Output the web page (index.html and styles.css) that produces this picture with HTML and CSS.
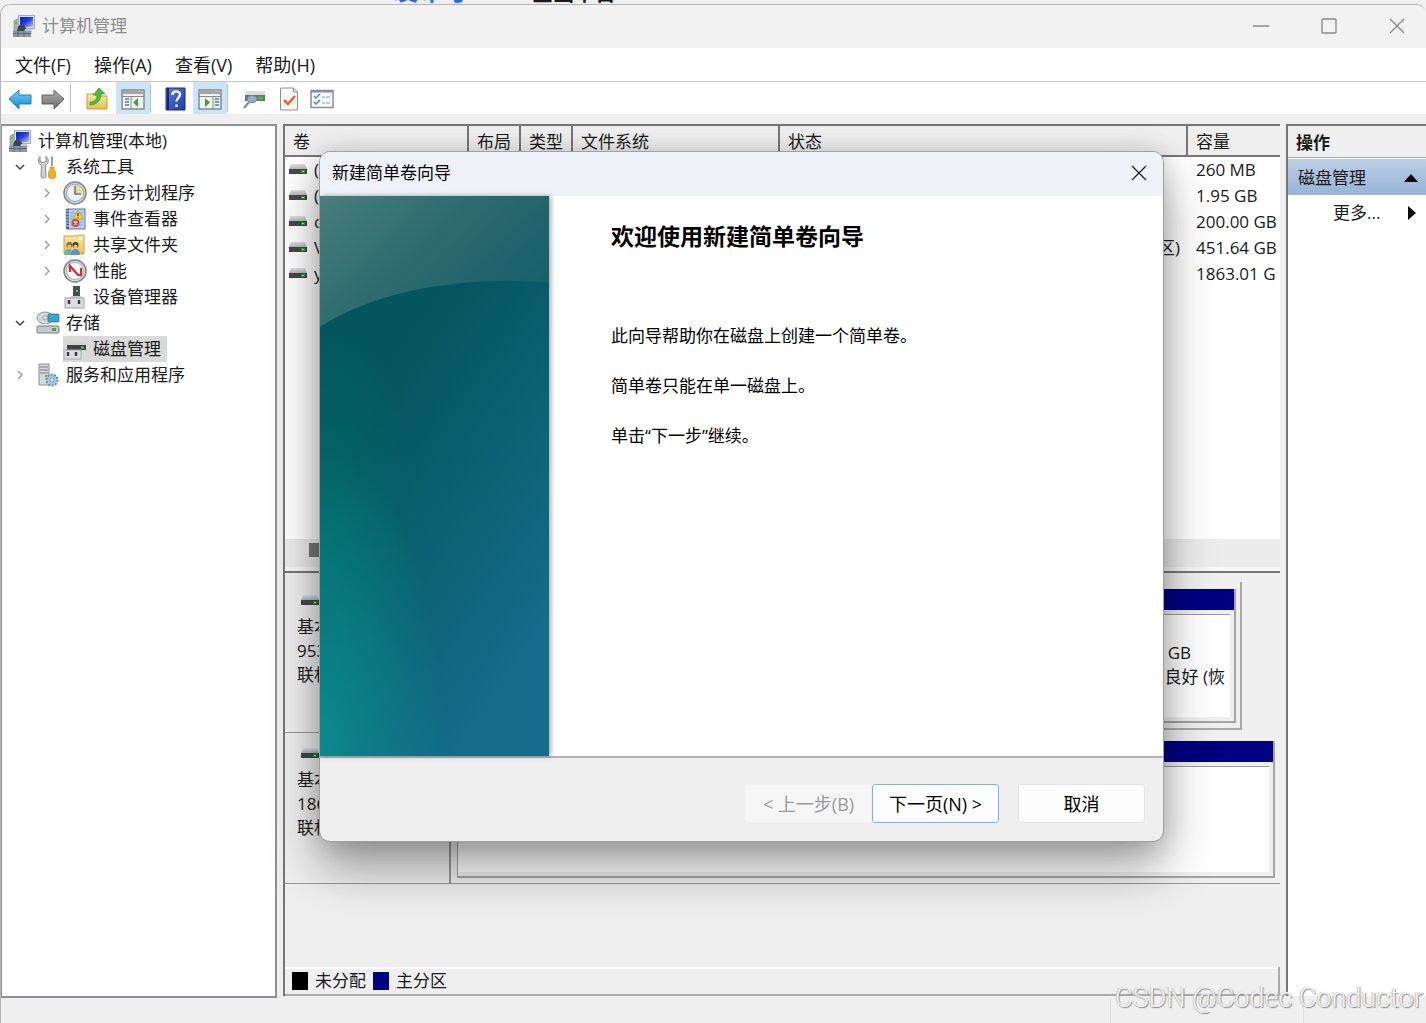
FILE: index.html
```html
<!DOCTYPE html>
<html lang="zh-CN">
<head>
<meta charset="utf-8">
<title>计算机管理</title>
<link rel="stylesheet" href="styles.css">
</head>
<body>
<svg class="defs" aria-hidden="true">
  <defs>
    <linearGradient id="gBlue" x1="0" y1="0" x2="1" y2="1"><stop offset="0" stop-color="#0a1cc0"/><stop offset=".5" stop-color="#2a3fe0"/><stop offset="1" stop-color="#b9c8ff"/></linearGradient>
    <linearGradient id="gArrow" x1="0" y1="0" x2="0" y2="1"><stop offset="0" stop-color="#7fd0f7"/><stop offset="1" stop-color="#0b86cf"/></linearGradient>
    <linearGradient id="gGrey" x1="0" y1="0" x2="0" y2="1"><stop offset="0" stop-color="#b0b0b0"/><stop offset="1" stop-color="#6c6c6c"/></linearGradient>
    <linearGradient id="gFolder" x1="0" y1="0" x2="0" y2="1"><stop offset="0" stop-color="#fbe6a0"/><stop offset="1" stop-color="#e9bf55"/></linearGradient>
    <linearGradient id="gHelp" x1="0" y1="0" x2="1" y2="1"><stop offset="0" stop-color="#5a7ee0"/><stop offset="1" stop-color="#1a3aa8"/></linearGradient>
    <linearGradient id="gDrive" x1="0" y1="0" x2="0" y2="1"><stop offset="0" stop-color="#e2e4e6"/><stop offset="1" stop-color="#b4b8bc"/></linearGradient>
    <linearGradient id="gBase" x1="0" y1="0" x2=".6" y2="1"><stop offset="0" stop-color="#00535a"/><stop offset=".4" stop-color="#06565f"/><stop offset="1" stop-color="#146c8a"/></linearGradient>
    <linearGradient id="gTop" x1="0" y1="0" x2="1" y2=".6"><stop offset="0" stop-color="#487d7c"/><stop offset=".5" stop-color="#2d6b6f"/><stop offset="1" stop-color="#17606a"/></linearGradient>
    <radialGradient id="gGlow" cx="0" cy="1" r=".55"><stop offset="0" stop-color="#0c8a8e"/><stop offset="1" stop-color="#0c8a8e" stop-opacity="0"/></radialGradient>
    <radialGradient id="gGreen" cx="0" cy=".65" r=".45"><stop offset="0" stop-color="#006f6b" stop-opacity=".8"/><stop offset="1" stop-color="#006f6b" stop-opacity="0"/></radialGradient>
    <symbol id="computer" viewBox="0 0 24 24">
      <path d="M2 7l3-2 3 2v10H2z" fill="#a9b4b0" stroke="#77807c" stroke-width=".6"/><rect x="3" y="8" width="2" height="2" fill="#6cb23a"/>
      <rect x="6.500" y="1.500" width="16" height="13" fill="#dfe2ea" stroke="#a5aab8"/><rect x="8" y="3" width="13" height="10" fill="url(#gBlue)"/>
      <path d="M6 13c2-3 5-3 8 1l1 3H5z" fill="#3b444e"/><path d="M13 15h6l1 3h-8z" fill="#c3c7cc"/>
      <rect x="1" y="17" width="18" height="6" fill="#8b99a3"/><path d="M1 19.500h18M6 17v6M12 17v6" stroke="#5c6a75" stroke-width="1"/>
    </symbol>
    <symbol id="tools" viewBox="0 0 24 24">
      <path d="M4 1.500v5l3 1 3-1v-5c3 2 3 7-.5 9l.5 11c0 2-5 2-5 0l.5-11C2 8.500 1.500 4 4 1.500z" fill="#cfd2d2" stroke="#888d8d" stroke-width="1"/>
      <path d="M16 1l1 1v9h-2V2z" fill="#9aa0a4"/><path d="M14 12h4v3l1.500 2v5c-1 2-6 2-7 0v-5l1.500-2z" fill="#f4b01c" stroke="#c58408" stroke-width=".6"/>
    </symbol>
    <symbol id="clock" viewBox="0 0 24 24">
      <circle cx="12" cy="12" r="11" fill="#d5d6d4" stroke="#85888a" stroke-width="1.500"/><circle cx="12" cy="12" r="8.500" fill="#eef1f5" stroke="#9da3a8"/>
      <path d="M12 12V4a8 8 0 0 1 7.500 8z" fill="#f0d79a"/><path d="M12 5v8h6" fill="none" stroke="#6b6f78" stroke-width="1.500"/>
    </symbol>
    <symbol id="event" viewBox="0 0 24 24">
      <rect x="4" y="2" width="18" height="20" fill="#b7cdf0" stroke="#5878ad"/><path d="M7 6h13M7 9h13M7 12h13M7 15h13M7 18h13" stroke="#7fa0d4" stroke-width=".8"/>
      <rect x="3" y="2" width="3" height="20" fill="#4c6594"/><path d="M2 4h4M2 7h4M2 10h4M2 13h4M2 16h4M2 19h4" stroke="#c7d0de" stroke-width="1"/>
      <path d="M15 3l5 9H10z" fill="#f6d31e" stroke="#c09c0b" stroke-width=".6"/><path d="M15 6v3M15 10v1" stroke="#333" stroke-width="1.200"/>
      <circle cx="12.500" cy="16" r="4" fill="#dd4646"/><path d="M11 14.500l3 3M14 14.500l-3 3" stroke="#fff" stroke-width="1.200"/>
    </symbol>
    <symbol id="share" viewBox="0 0 24 24">
      <path d="M1 3h13l2-1h5v19H1z" fill="url(#gFolder)" stroke="#cba248"/><path d="M16 4h4v3h-4z" fill="#fff3c8"/>
      <circle cx="6.500" cy="12" r="3" fill="#8d6030"/><circle cx="12.500" cy="12" r="3" fill="#4a3a28"/><circle cx="6.500" cy="13.500" r="2" fill="#e9bd92"/><circle cx="12.500" cy="13.500" r="2" fill="#e9bd92"/>
      <path d="M1 22c0-8 9-8 9 0z" fill="#64b8a6"/><path d="M8 22c0-8 9-8 9 0z" fill="#5b93c8"/>
    </symbol>
    <symbol id="perf" viewBox="0 0 24 24">
      <circle cx="12" cy="12" r="11" fill="#d9d9d9" stroke="#808385" stroke-width="1.500"/><circle cx="12" cy="12" r="8.500" fill="#fff" stroke="#a9abad"/>
      <path d="M7 13V7l8 9h3V9" fill="none" stroke="#dc2626" stroke-width="2.200"/>
    </symbol>
    <symbol id="device" viewBox="0 0 24 24">
      <rect x="10" y="1" width="7" height="10" fill="#4b4f52"/><rect x="13" y="5" width="2" height="2" fill="#5cc24c"/><path d="M9 11h9l3 3H4z" fill="#cacdcf"/>
      <rect x="2" y="13" width="19" height="10" fill="#dcdedf" stroke="#9fa3a5"/><path d="M6 15v4M16 15v4" stroke="#3b3f42" stroke-width="2.500"/>
    </symbol>
    <symbol id="storage" viewBox="0 0 24 24">
      <ellipse cx="9" cy="7" rx="8" ry="6" fill="#d3d6d9" stroke="#8f9498"/><circle cx="9" cy="7" r="2" fill="#fff" stroke="#9a9fa3"/>
      <rect x="12" y="3" width="11" height="8" rx="1" fill="#38a5d6" stroke="#1b6f99" stroke-width=".7"/>
      <path d="M3 13h18l2 3H1z" fill="#eceeef"/><rect x="1" y="15" width="22" height="7" rx="1" fill="#c5c9cc" stroke="#7c8184"/><rect x="16" y="17" width="4" height="3" fill="#4ca63a"/>
    </symbol>
    <symbol id="diskmgmt" viewBox="0 0 24 24">
      <path d="M6 5h16l1 3H4z" fill="#d3d5d7"/><rect x="4" y="8" width="19" height="5" fill="#3d4143"/><rect x="18" y="9.500" width="3" height="2" fill="#54d040"/>
      <rect x="1" y="13" width="17" height="9" fill="#dcdedf" stroke="#a8abad"/><path d="M5 15v4M13 15v4" stroke="#3b3f42" stroke-width="2.500"/>
    </symbol>
    <symbol id="services" viewBox="0 0 24 24">
      <path d="M3 1h10v21H3z" fill="#d2d8dc" stroke="#8a9298"/><path d="M4 4h8M4 7h8M4 10h8" stroke="#7c868d"/><rect x="9" y="12" width="2" height="2" fill="#5cc24c"/>
      <circle cx="16" cy="17" r="5.500" fill="#a9c9e2" stroke="#5f8fb3" stroke-width="2" stroke-dasharray="2 1.400"/><circle cx="16" cy="17" r="2" fill="#fff" stroke="#5f8fb3"/>
    </symbol>
    <symbol id="drive" viewBox="0 0 18 12">
      <path d="M2 0h14l2 5H0z" fill="url(#gDrive)"/><rect y="5" width="18" height="5" fill="#45494b"/><rect x="12" y="6" width="4" height="3" fill="#2fa02c"/><rect x="13" y="7" width="2" height="1" fill="#7dfa6c"/>
    </symbol>
    <symbol id="down" viewBox="0 0 10 10"><path d="M1 3l4 4 4-4" fill="none" stroke="#444" stroke-width="1.500"/></symbol>
    <symbol id="right" viewBox="0 0 10 10"><path d="M3 1l4 4-4 4" fill="none" stroke="#999" stroke-width="1.300"/></symbol>
  </defs>
</svg>

<div class="behind" aria-hidden="true"><span class="behind-blue">发布号</span><span class="behind-black">企画平台</span></div>

<div class="window">
  <header class="titlebar">
    <svg class="icon"><use href="#computer"/></svg>
    <h1>计算机管理</h1>
    <div class="controls">
      <button aria-label="最小化"><svg viewBox="0 0 16 16"><path d="M0 8h16"/></svg></button>
      <button aria-label="最大化"><svg viewBox="0 0 16 16"><rect x="1" y="1" width="14" height="14" rx="1"/></svg></button>
      <button aria-label="关闭"><svg viewBox="0 0 16 16"><path d="M1 1l14 14M15 1L1 15"/></svg></button>
    </div>
  </header>

  <nav class="menubar">
    <button>文件(F)</button><button>操作(A)</button><button>查看(V)</button><button>帮助(H)</button>
  </nav>

  <div class="toolbar" role="toolbar">
    <button aria-label="后退"><svg viewBox="0 0 24 24"><path d="M1 12L11 3v5h12v9H11v5z" fill="url(#gArrow)" stroke="#2d7fb8" stroke-linejoin="round"/></svg></button>
    <button aria-label="前进"><svg viewBox="0 0 24 24"><path d="M23 12L13 3v5H1v9h12v5z" fill="url(#gGrey)" stroke="#636363" stroke-linejoin="round"/></svg></button>
    <i class="sep"></i>
    <button aria-label="向上一级" class="up"><svg viewBox="0 0 24 24"><path d="M2 7h7l2 2h11v13H2z" fill="url(#gFolder)" stroke="#c79a3d"/><path d="M5 15c5 0 7-3 7-7H8l6-7 6 6h-4c0 6-4 11-11 11z" fill="#45bf35" stroke="#2b9620" stroke-width=".6"/></svg></button>
    <button aria-label="显示/隐藏控制台树" class="on"><svg viewBox="0 0 24 24"><rect x="1" y="3" width="22" height="19" fill="#f2f2f2" stroke="#858a8f" stroke-width="1.500"/><path d="M1 5.500h22" stroke="#a2a6aa" stroke-width="3"/><path d="M1 9.500h22M10 9v13" stroke="#858a8f"/><path d="M17 4.500h1.500M20 4.500h1.500" stroke="#fff"/><path d="M4 12h4M4 15h4M4 18h4" stroke="#4a7db0" stroke-width="1.500"/><path d="M17 11v9l-5-4.500z" fill="#3fa52c"/></svg></button>
    <i class="sep"></i>
    <button aria-label="帮助" class="help"><svg viewBox="0 0 24 24"><path d="M3 1h19v22H3z" fill="url(#gHelp)" stroke="#1b2f7a"/><path d="M5 1v22" stroke="#12286e" stroke-width="2"/><path d="M9.500 8c0-5 7.500-4.500 7.500-.5 0 3-3.500 3.500-3.500 7M13.500 17.500v2.500" fill="none" stroke="#fff" stroke-width="2.400"/></svg></button>
    <button aria-label="显示/隐藏操作窗格" class="on"><svg viewBox="0 0 24 24"><rect x="1" y="3" width="22" height="19" fill="#f2f2f2" stroke="#858a8f" stroke-width="1.500"/><path d="M1 5.500h22" stroke="#a2a6aa" stroke-width="3"/><path d="M1 9.500h22M15 9v13" stroke="#858a8f"/><path d="M17 4.500h1.500M20 4.500h1.500" stroke="#fff"/><path d="M17 12h4M17 15h4M17 18h4" stroke="#4a7db0" stroke-width="1.500"/><path d="M7 11v9l5-4.500z" fill="#3fa52c"/></svg></button>
    <i class="sep"></i>
    <button aria-label="设置" class="conn"><svg viewBox="0 0 24 24"><path d="M5 4h18v4H3z" fill="#d9dbdd"/><rect x="3" y="8" width="20" height="6" fill="#6d7275"/><rect x="16" y="9.500" width="5" height="3" fill="#35c82a"/><ellipse cx="10" cy="12" rx="5" ry="3.500" fill="#8fb2c6" stroke="#71838f"/><path d="M7 15l-5 6" stroke="#8c9396" stroke-width="2.500"/></svg></button>
    <button aria-label="属性" class="doc"><svg viewBox="0 0 24 24"><path d="M3.500 1h13l4 4v18h-17z" fill="#f8f8f8" stroke="#8f8f8f"/><path d="M16.500 1v4h4" fill="none" stroke="#8f8f8f"/><path d="M7 13l4 4 7-8" fill="none" stroke="#e8642a" stroke-width="2.500"/></svg></button>
    <button aria-label="列表"><svg viewBox="0 0 24 24"><rect x="1" y="3.500" width="22" height="17" fill="#f6f8fa" stroke="#8b8f93" stroke-width="1.500"/><path d="M1 4.500h22" stroke="#8b8f93" stroke-width="2"/><path d="M4 9l2 2 4-4M4 15l2 2 4-4" fill="none" stroke="#4a90d0" stroke-width="1.500"/><path d="M12 10h3M16 10h4M12 16h3M16 16h4" stroke="#8aa0b3" stroke-width="1.200"/></svg></button>
  </div>

  <main class="content">
    <nav class="tree">
      <ul>
        <li><a href="#"><svg class="icon"><use href="#computer"/></svg>计算机管理(本地)</a></li>
        <li class="l1"><svg class="arrow"><use href="#down"/></svg><a href="#"><svg class="icon"><use href="#tools"/></svg>系统工具</a></li>
        <li class="l2"><svg class="arrow"><use href="#right"/></svg><a href="#"><svg class="icon"><use href="#clock"/></svg>任务计划程序</a></li>
        <li class="l2"><svg class="arrow"><use href="#right"/></svg><a href="#"><svg class="icon"><use href="#event"/></svg>事件查看器</a></li>
        <li class="l2"><svg class="arrow"><use href="#right"/></svg><a href="#"><svg class="icon"><use href="#share"/></svg>共享文件夹</a></li>
        <li class="l2"><svg class="arrow"><use href="#right"/></svg><a href="#"><svg class="icon"><use href="#perf"/></svg>性能</a></li>
        <li class="l2"><i class="arrow"></i><a href="#"><svg class="icon"><use href="#device"/></svg>设备管理器</a></li>
        <li class="l1"><svg class="arrow"><use href="#down"/></svg><a href="#"><svg class="icon"><use href="#storage"/></svg>存储</a></li>
        <li class="l2"><i class="arrow"></i><a href="#" class="selected"><svg class="icon"><use href="#diskmgmt"/></svg>磁盘管理</a></li>
        <li class="l1"><svg class="arrow"><use href="#right"/></svg><a href="#"><svg class="icon"><use href="#services"/></svg>服务和应用程序</a></li>
      </ul>
    </nav>

    <section class="center">
      <div class="volumes">
        <table>
          <colgroup><col class="c-vol"><col class="c-small"><col class="c-small"><col class="c-fs"><col><col class="c-cap"></colgroup>
          <thead><tr><th>卷</th><th>布局</th><th>类型</th><th>文件系统</th><th>状态</th><th>容量</th></tr></thead>
          <tbody>
            <tr><td><svg class="drive"><use href="#drive"/></svg>(</td><td></td><td></td><td></td><td></td><td>260 MB</td></tr>
            <tr><td><svg class="drive"><use href="#drive"/></svg>(</td><td></td><td></td><td></td><td></td><td>1.95 GB</td></tr>
            <tr><td><svg class="drive"><use href="#drive"/></svg>d</td><td></td><td></td><td></td><td></td><td>200.00 GB</td></tr>
            <tr><td><svg class="drive"><use href="#drive"/></svg>V</td><td></td><td></td><td></td><td class="status">区)</td><td>451.64 GB</td></tr>
            <tr><td><svg class="drive"><use href="#drive"/></svg>y</td><td></td><td></td><td></td><td></td><td>1863.01 G</td></tr>
          </tbody>
        </table>
        <div class="scroll"><i></i></div>
      </div>

      <div class="disk first">
        <div class="disk-label"><svg class="drive"><use href="#drive"/></svg><p>基本</p><p>953</p><p>联机</p></div>
        <div class="parts"><div class="part"><div class="bar"></div><div class="part-body"><p class="size">GB</p><p>良好 (恢</p></div></div></div>
      </div>
      <div class="disk second">
        <div class="disk-label"><svg class="drive"><use href="#drive"/></svg><p>基本</p><p>186</p><p>联机</p></div>
        <div class="parts"><div class="part"><div class="bar"></div><div class="part-body"></div></div></div>
      </div>

      <div class="legend"><i class="black"></i>未分配<i class="navy"></i>主分区</div>
    </section>

    <aside class="actions">
      <h2>操作</h2>
      <button class="group">磁盘管理<svg viewBox="0 0 14 8"><path d="M7 0l7 8H0z"/></svg></button>
      <button class="more">更多...<svg viewBox="0 0 8 14"><path d="M0 0l8 7-8 7z"/></svg></button>
    </aside>
  </main>

  <footer class="statusbar"><i></i><i></i></footer>
</div>

<section class="dialog" role="dialog" aria-labelledby="wizard-title">
  <header><h2 id="wizard-title">新建简单卷向导</h2><button aria-label="关闭"><svg viewBox="0 0 16 16"><path d="M1 1l14 14M15 1L1 15"/></svg></button></header>
  <div class="wizard">
    <svg class="banner" viewBox="0 0 229 561" preserveAspectRatio="none" aria-hidden="true">
      <rect width="229" height="561" fill="url(#gBase)"/><rect width="229" height="561" fill="url(#gGreen)"/><rect width="229" height="561" fill="url(#gGlow)"/>
      <path d="M0 0h229v87C150 80 60 92 0 131z" fill="url(#gTop)"/>
    </svg>
    <div class="copy">
      <h3>欢迎使用新建简单卷向导</h3>
      <p>此向导帮助你在磁盘上创建一个简单卷。</p>
      <p>简单卷只能在单一磁盘上。</p>
      <p>单击“下一步”继续。</p>
    </div>
  </div>
  <footer><button disabled>&lt; 上一步(B)</button><button class="primary">下一页(N) &gt;</button><button class="cancel">取消</button></footer>
</section>

<div class="watermark">CSDN @Codec Conductor</div>
</body>
</html>
```
FILE: styles.css
```css
* { box-sizing: border-box; }

body {
  margin: 0;
  min-height: 100vh;
  display: flex;
  flex-direction: column;
  position: relative;
  overflow: hidden;
  background: #f0f0f0;
  color: #1a1a1a;
  font: 17px/24px "Open Sans", "Noto Sans CJK SC", sans-serif;
}

h1, h2, h3, p, ul { margin: 0; padding: 0; font-weight: 400; font-size: inherit; }
button { font: inherit; color: inherit; border: 0; padding: 0; background: none; }
a { color: inherit; text-decoration: none; }
svg { display: block; flex: none; }

.defs { position: absolute; width: 0; height: 0; }
.icon { width: 24px; height: 24px; }
.drive { width: 18px; height: 12px; }

/* Slice of the page behind the window */
.behind {
  height: 4px;
  display: flex;
  align-items: flex-end;
  gap: 64px;
  padding-left: 393px;
  overflow: hidden;
  font-weight: 700;
}
.behind-blue { color: #2468f2; font-size: 25px; line-height: 28px; }
.behind-black { font-size: 21px; line-height: 24px; }

.window {
  flex: 1;
  display: flex;
  flex-direction: column;
  border: 1px solid #b4b4b4;
  border-width: 1px 0 0 1px;
  border-radius: 10px 10px 0 0;
  background: #efefef;
  overflow: hidden;
}

.titlebar {
  height: 43px;
  display: flex;
  align-items: center;
  gap: 6px;
  padding: 0 21px 2px 11px;
  background: #f2f2f2;
  color: #8c8c8c;
}
.titlebar h1 { flex: 1; }
.controls { display: flex; gap: 52px; }
.controls svg, .dialog header svg { width: 16px; height: 16px; fill: none; stroke: #888; stroke-width: 1.3; }

.menubar {
  height: 34px;
  display: flex;
  align-items: center;
  gap: 23px;
  padding-left: 14px;
  font-size: 18px;
  background: #fff;
  border-bottom: 1px solid #c6c6c6;
}

.toolbar {
  height: 32px;
  display: flex;
  align-items: center;
  padding-left: 3px;
  background: #fff;
}
.toolbar button { width: 33px; height: 32px; padding: 2px 4px 0; }
.toolbar svg { width: 24px; height: 24px; }
.toolbar .on { background: #cce4f8; width: 34px; padding: 2px 5px 0; }
.toolbar .up { margin-left: 10px; width: 35px; }
.toolbar .help { margin-left: 8px; width: 34px; }
.toolbar .conn { margin-left: 10px; width: 35px; }
.sep { width: 1px; height: 28px; background: #c0c0c0; }

.content {
  flex: 1;
  display: grid;
  grid-template-columns: 276px minmax(0, 1fr) 140px;
  column-gap: 6px;
  padding-top: 10px;
}

.tree { border: 2px solid #8d9095; border-left-width: 1px; background: #fff; padding: 2px 0 0 6px; margin-bottom: 1px; }
.tree ul { list-style: none; }
.tree li { display: flex; height: 26px; align-items: center; }
.tree a { display: flex; align-items: center; gap: 6px; height: 26px; padding-right: 6px; }
.tree .selected { background: #d9d9d9; }
.arrow { width: 10px; height: 10px; margin: 0 11px 0 7px; }
.l2 { padding-left: 27px; }

.center {
  display: flex;
  flex-direction: column;
  border-left: 2px solid #767676;
  border-top: 2px solid #767676;
  margin-bottom: 3px;
}

.volumes {
  min-height: 447px;
  display: flex;
  flex-direction: column;
  justify-content: space-between;
  background: #fff;
  border-bottom: 2px solid #777;
  overflow: hidden;
}
table { width: 100%; table-layout: fixed; border-collapse: separate; border-spacing: 0; }
.c-vol { width: 184px; }
.c-small { width: 52px; }
.c-fs { width: 207px; }
.c-cap { width: 92px; }
th {
  height: 31px;
  padding: 2px 0 0 8px;
  text-align: left;
  font-weight: 400;
  white-space: nowrap;
  background: #efefef;
  border-right: 2px solid #777;
  border-bottom: 2px solid #777;
}
th:last-child { border-right: 0; }
td { height: 26px; padding: 0 0 0 8px; white-space: nowrap; overflow: hidden; }
td:first-child { padding-left: 4px; }
td .drive { display: inline-block; margin-right: 7px; }
td.status { text-align: right; padding-right: 8px; }

.scroll { height: 32px; padding: 4px 24px; background: #ececec; border-bottom: 4px solid #f6f6f6; }
.scroll i { display: block; width: 520px; height: 14px; background: #7a7a7a; }

.disk { display: flex; }
.first { height: 160px; }
.second { height: 151px; border-bottom: 1px solid #999; }
.disk-label { width: 166px; padding: 22px 0 0 12px; border-right: 2px solid #999; }
.first .disk-label { border-bottom: 1px solid #999; }
.second .disk-label { padding-top: 15px; }
.disk-label .drive { margin: 0 0 8px 4px; }
.parts { flex: 1; padding: 8px 5px 5px 6px; }
.first .parts { padding: 7px 4px 5px 6px; margin: 9px 38px 3px 0; border-right: 2px solid #aaa; border-bottom: 2px solid #aaa; }
.part { height: 100%; display: flex; flex-direction: column; border: solid #a4a4a4; border-width: 0 2px 2px 1px; }
.bar { height: 21px; background: #000080; }
.part-body { flex: 1; margin: 4px 4px 4px 0; background: #fff; border-top: 1px solid #999; text-align: right; padding: 26px 5px 0 0; }
.part-body .size { padding-right: 34px; }

.legend {
  margin-top: auto;
  height: 29px;
  display: flex;
  align-items: center;
  gap: 7px;
  padding-left: 7px;
  border: solid #aaa;
  border-width: 0 2px 2px 0;
  box-shadow: inset 0 2px #fafafa;
}
.legend i { width: 16px; height: 18px; }
.black { background: #000; }
.navy { background: #000080; }

.actions {
  display: flex;
  flex-direction: column;
  background: #fff;
  border-left: 2px solid #777;
  border-top: 2px solid #777;
  margin-bottom: 3px;
}
.actions h2 { height: 32px; padding: 5px 8px 0; background: #efefef; border-bottom: 1px solid #aaa; font-weight: 700; }
.actions button { display: flex; align-items: center; justify-content: space-between; text-align: left; }
.group { height: 36px; margin-top: 1px; padding: 2px 8px 0 10px; background: linear-gradient(#bccfe6, #98b3d5); }
.group svg { width: 14px; height: 8px; }
.more { height: 36px; padding: 0 10px 0 45px; }
.more svg { width: 8px; height: 14px; }

.statusbar { height: 24px; display: flex; justify-content: flex-end; gap: 192px; padding-right: 122px; }
.statusbar i { width: 1px; background: #dedede; }

/* Wizard window, floating above the console */
.dialog {
  position: absolute;
  top: 151px;
  left: 319px;
  right: 262px;
  border: 1px solid #a0a0a0;
  border-radius: 11px;
  background: #efefef;
  overflow: hidden;
  color: #000;
  box-shadow: 0 26px 50px rgba(0, 0, 0, .36), 0 2px 24px rgba(0, 0, 0, .16);
}
.dialog header {
  height: 44px;
  display: flex;
  align-items: center;
  justify-content: space-between;
  padding: 0 16px 2px 12px;
  background: #eff3f9;
}
.dialog header svg { stroke: #222; }
.wizard { display: flex; background: #fff; border-bottom: 2px solid #b4b4b4; }
.banner { width: 229px; height: 560px; box-shadow: 2px 0 5px rgba(0, 0, 0, .35); }
.copy { padding: 24px 20px 0 62px; }
.copy h3 { font-size: 23px; line-height: 32px; font-weight: 700; margin-bottom: 72px; }
.copy p { margin-bottom: 26px; }
.dialog footer { display: flex; justify-content: flex-end; padding: 26px 18px 18px; font-size: 18px; }
.dialog footer button { width: 127px; height: 39px; background: #fdfdfd; border: 1px solid #e6e6e6; border-radius: 3px; }
.dialog footer button:disabled { background: #f5f5f5; border-color: #f2f2f2; color: #9b9b9b; }
.dialog footer .primary { border-color: #77b4e4; }
.dialog footer .cancel { margin-left: 19px; }

.watermark {
  position: absolute;
  right: 3px;
  bottom: 8px;
  font: 300 27px/34px Roboto, sans-serif;
  color: #f2f2f2;
  text-shadow: 1px 1px 1px #8c8c8c, -1px 0 1px #c8c8c8;
}
```
